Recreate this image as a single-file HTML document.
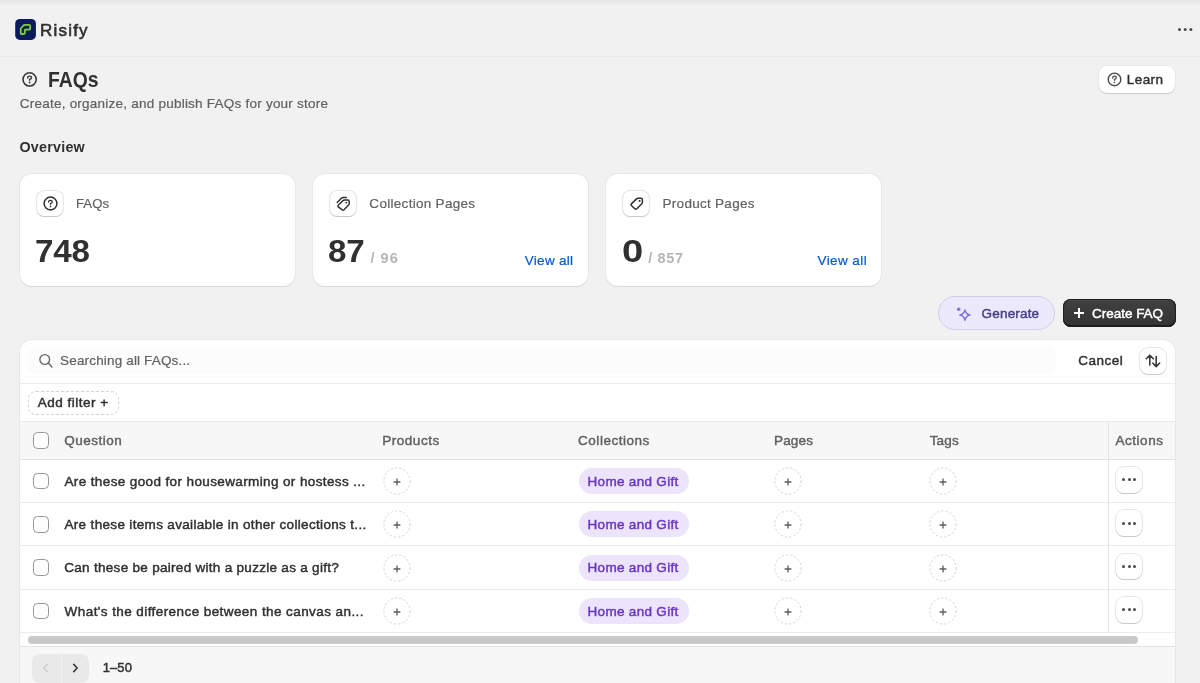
<!DOCTYPE html>
<html><head><meta charset="utf-8">
<style>
*{box-sizing:border-box;margin:0;padding:0}
html,body{width:1200px;height:683px;overflow:hidden;background:#f1f1f1;font-family:"Liberation Sans",sans-serif;color:#303030}
.abs{position:absolute}
.t{position:absolute;white-space:nowrap;line-height:1}
#txt{position:absolute;left:0;top:0;width:1200px;height:683px;will-change:transform}
#topstrip{left:0;top:0;width:1200px;height:6px;background:linear-gradient(#e6e6e6 0,#e7e7e7 30%,#eeeeee 70%,#f1f1f1 100%)}
#sep{left:0;top:56px;width:1200px;height:1px;background:#e9e9e9}
.card{position:absolute;background:#fff;border-radius:12px;box-shadow:0 1px 0 0 #d9d9d9,0 0 0 1px #e8e8e8}
.iconbox{position:absolute;width:25.6px;height:25.2px;border-radius:7px;background:#fff;box-shadow:0 1px 0 0 #c9c9c9,0 0 0 1px #e6e6e6}
#tbl{left:20px;top:339.7px;width:1155px;height:360px;background:#fff;border-radius:12px 12px 0 0;box-shadow:0 0 0 1px #e8e8e8}
.hrow{position:absolute;left:20px;width:1155px;height:1px;background:#ebebeb}
.cb{position:absolute;width:16.5px;height:16.5px;border:1px solid #969696;border-radius:4.5px;background:#fdfdfd}
.plus{position:absolute;width:27.4px;height:27.4px;border:1px dashed #d4d4d4;border-radius:50%}
.plus:before,.plus:after{content:"";position:absolute;background:#616161}
.plus:before{left:9.45px;top:12.05px;width:6.5px;height:1.3px}
.plus:after{left:12.05px;top:9.45px;width:1.3px;height:6.5px}
.tag{position:absolute;width:110.6px;height:26px;border-radius:13px;background:#ebe4fa}
.act{position:absolute;width:26.4px;height:25.6px;border-radius:8px;background:#fff;box-shadow:0 1px 0 0 #cbcbcb,0 0 0 1px #e7e7e7}
.act i{position:absolute;top:11.4px;width:3px;height:3px;border-radius:50%;background:#4a4a4a}
.btn{position:absolute;border-radius:8px;background:#fff;box-shadow:0 1px 0 0 #cbcbcb,0 0 0 1px #e7e7e7}
</style></head><body>
<div class="abs" id="topstrip"></div>
<div class="abs" id="sep"></div>

<!-- header -->
<svg class="abs" style="left:15px;top:19px" width="21" height="21" viewBox="0 0 21 21"><rect x="0.2" y="0" width="20.7" height="20.9" rx="4.6" fill="#0c1b5c"/><path d="M5.7 10.2 Q5.7 9.6 6.2 9 L8.4 6.5 Q9 5.9 9.8 5.9 H13.8 Q15.2 5.9 15.2 7.3 V9.4 Q15.2 10.6 14 10.6 H10 V13.8 Q10 15 8.8 15 H6.7 Q5.7 15 5.7 14 Z" fill="#0d2b36" stroke="#84cc3c" stroke-width="1.8" stroke-linejoin="round"/></svg>
<div class="abs" style="left:1177.5px;top:28.2px;width:3px;height:3px;border-radius:50%;background:#4a4a4a;box-shadow:5.7px 0 0 #4a4a4a,11.4px 0 0 #4a4a4a"></div>

<!-- title icon -->
<svg class="abs" style="left:21px;top:71px" width="17" height="17" viewBox="0 0 17 17"><circle cx="8.6" cy="8.4" r="6.6" fill="none" stroke="#3a3a3a" stroke-width="1.6"/><path d="M6.7 7.0 Q6.7 5.1 8.6 5.1 Q10.5 5.1 10.5 6.8 Q10.5 7.9 8.6 8.5 V9.3" fill="none" stroke="#3a3a3a" stroke-width="1.4" stroke-linecap="round"/><circle cx="8.6" cy="11.5" r="0.9" fill="#3a3a3a"/></svg>

<!-- learn -->
<div class="btn" style="left:1099px;top:66px;width:76px;height:27px"></div>
<svg class="abs" style="left:1106.2px;top:71px" width="17" height="17" viewBox="0 0 17 17"><circle cx="8.5" cy="8.4" r="6.3" fill="none" stroke="#4a4a4a" stroke-width="1.4"/><path d="M6.7 7.0 Q6.7 5.2 8.5 5.2 Q10.3 5.2 10.3 6.8 Q10.3 7.8 8.5 8.4 V9.2" fill="none" stroke="#4a4a4a" stroke-width="1.3" stroke-linecap="round"/><circle cx="8.5" cy="11.3" r="0.85" fill="#4a4a4a"/></svg>

<!-- cards -->
<div class="card" style="left:20px;top:174px;width:275px;height:112px"></div>
<div class="card" style="left:313px;top:174px;width:275px;height:112px"></div>
<div class="card" style="left:606px;top:174px;width:275px;height:112px"></div>
<div class="iconbox" style="left:37.2px;top:190.8px"></div>
<div class="iconbox" style="left:330.2px;top:190.8px"></div>
<div class="iconbox" style="left:623.2px;top:190.8px"></div>
<svg class="abs" style="left:41.5px;top:195.2px" width="17" height="17" viewBox="0 0 17 17"><circle cx="8.5" cy="8.5" r="6.4" fill="none" stroke="#303030" stroke-width="1.5"/><path d="M6.7 7.1 Q6.7 5.3 8.5 5.3 Q10.3 5.3 10.3 6.9 Q10.3 7.9 8.5 8.5 V9.3" fill="none" stroke="#303030" stroke-width="1.3" stroke-linecap="round"/><circle cx="8.5" cy="11.4" r="0.85" fill="#303030"/></svg>
<!-- collection icon -->
<svg class="abs" style="left:334.5px;top:195px" width="17" height="17" viewBox="0 0 17 17"><g fill="none" stroke="#303030" stroke-width="1.45" stroke-linecap="round" stroke-linejoin="round"><path d="M3.3 10.3 L8 5.6 Q8.7 5 9.6 5 H12.7 Q14.2 5 14.2 6.5 V8.6 Q14.2 9.5 13.6 10.1 L9 14.7 Q8 15.6 7 14.7 L3.3 11.9 Q2.5 11.1 3.3 10.3 Z"/><path d="M2.2 7.4 L6.4 3.2 Q7.2 2.4 8.3 2.4 H11.3"/></g><circle cx="11.3" cy="7.6" r="0.95" fill="#303030"/></svg>
<!-- product icon -->
<svg class="abs" style="left:627.5px;top:195px" width="17" height="17" viewBox="0 0 17 17"><g fill="none" stroke="#303030" stroke-width="1.5" stroke-linecap="round" stroke-linejoin="round"><path d="M3.4 8.9 L8.5 3.9 Q9.2 3.3 10.1 3.3 H12.9 Q14.4 3.3 14.4 4.8 V7.2 Q14.4 8.1 13.8 8.7 L8.8 13.7 Q7.8 14.6 6.8 13.7 L3.4 10.5 Q2.6 9.7 3.4 8.9 Z"/></g><circle cx="11.6" cy="6" r="1" fill="#303030"/></svg>

<!-- buttons -->
<div class="abs" style="left:937.8px;top:296px;width:116.8px;height:33.5px;border-radius:17px;background:#ece9fd;border:1px solid #d1cdea"></div>
<svg class="abs" style="left:955px;top:305px" width="18" height="18" viewBox="0 0 18 18"><circle cx="3.7" cy="4.3" r="1.8" fill="#8275d6"/><path d="M9.9 5 Q10.9 9.1 15 10.1 Q10.9 11.1 9.9 15.2 Q8.9 11.1 4.8 10.1 Q8.9 9.1 9.9 5 Z" fill="none" stroke="#8275d6" stroke-width="1.5" stroke-linejoin="round"/></svg>
<div class="abs" style="left:1063px;top:299px;width:112.6px;height:27.7px;border-radius:8px;background:linear-gradient(#404040,#333333);box-shadow:inset 0 0 0 1px #1f1f1f,inset 0 -2px 0 0 #1a1a1a,inset 0 1.5px 0 0 #555"></div>
<div class="abs" style="left:1074.2px;top:312.35px;width:9.8px;height:1.3px;background:#fff"></div>
<div class="abs" style="left:1078.45px;top:308.1px;width:1.3px;height:9.8px;background:#fff"></div>

<!-- table card -->
<div class="abs" id="tbl"></div>
<div class="abs" style="left:28px;top:347px;width:1028px;height:27px;border-radius:8px;background:#fcfcfc"></div>
<svg class="abs" style="left:38px;top:353px" width="16" height="16" viewBox="0 0 16 16"><circle cx="6.75" cy="6.5" r="4.85" fill="none" stroke="#6a6a6a" stroke-width="1.4"/><path d="M10.3 10 L13.9 13.9" stroke="#6a6a6a" stroke-width="1.5" stroke-linecap="round"/></svg>
<div class="btn" style="left:1140.2px;top:348.2px;width:26px;height:25.5px"></div>
<svg class="abs" style="left:1145px;top:353px" width="16" height="16" viewBox="0 0 16 16"><path d="M4.8 12 V2.4 M1.3 5.8 L4.8 2.2 L8.3 5.8 M11.2 3.6 V13.4 M7.7 10 L11.2 13.6 L14.7 10" fill="none" stroke="#3a3a3a" stroke-width="1.6" stroke-linecap="round" stroke-linejoin="round"/></svg>
<div class="hrow" style="top:383px"></div>
<div class="abs" style="left:27.5px;top:390.5px;width:91px;height:24px;border:1px dashed #d4d4d4;border-radius:8px"></div>
<div class="abs" style="left:20px;top:421px;width:1155px;height:39px;background:#f7f7f7;border-top:1px solid #ebebeb;border-bottom:1px solid #e3e3e3"></div>
<div class="cb" style="left:32.6px;top:432px"></div>
<div class="cb" style="left:32.5px;top:472.80px"></div>
<svg class="abs" style="left:382.6px;top:466.90px" width="28" height="28" viewBox="0 0 28 28"><circle cx="14" cy="14" r="13.1" fill="none" stroke="#d2d2d2" stroke-width="1" stroke-dasharray="2.2 2.05"/><path d="M10.6 15H17.4M14 11.6V18.4" stroke="#5c5c5c" stroke-width="1.3"/></svg>
<svg class="abs" style="left:774.4px;top:466.90px" width="28" height="28" viewBox="0 0 28 28"><circle cx="14" cy="14" r="13.1" fill="none" stroke="#d2d2d2" stroke-width="1" stroke-dasharray="2.2 2.05"/><path d="M10.6 15H17.4M14 11.6V18.4" stroke="#5c5c5c" stroke-width="1.3"/></svg>
<svg class="abs" style="left:929.4px;top:466.90px" width="28" height="28" viewBox="0 0 28 28"><circle cx="14" cy="14" r="13.1" fill="none" stroke="#d2d2d2" stroke-width="1" stroke-dasharray="2.2 2.05"/><path d="M10.6 15H17.4M14 11.6V18.4" stroke="#5c5c5c" stroke-width="1.3"/></svg>
<div class="tag" style="left:578.5px;top:468.10px"></div>
<div class="act" style="left:1116px;top:467.00px"><i style="left:6.4px"></i><i style="left:11.9px"></i><i style="left:17.4px"></i></div>
<div class="hrow" style="top:502.00px"></div>
<div class="cb" style="left:32.5px;top:516.13px"></div>
<svg class="abs" style="left:382.6px;top:510.23px" width="28" height="28" viewBox="0 0 28 28"><circle cx="14" cy="14" r="13.1" fill="none" stroke="#d2d2d2" stroke-width="1" stroke-dasharray="2.2 2.05"/><path d="M10.6 15H17.4M14 11.6V18.4" stroke="#5c5c5c" stroke-width="1.3"/></svg>
<svg class="abs" style="left:774.4px;top:510.23px" width="28" height="28" viewBox="0 0 28 28"><circle cx="14" cy="14" r="13.1" fill="none" stroke="#d2d2d2" stroke-width="1" stroke-dasharray="2.2 2.05"/><path d="M10.6 15H17.4M14 11.6V18.4" stroke="#5c5c5c" stroke-width="1.3"/></svg>
<svg class="abs" style="left:929.4px;top:510.23px" width="28" height="28" viewBox="0 0 28 28"><circle cx="14" cy="14" r="13.1" fill="none" stroke="#d2d2d2" stroke-width="1" stroke-dasharray="2.2 2.05"/><path d="M10.6 15H17.4M14 11.6V18.4" stroke="#5c5c5c" stroke-width="1.3"/></svg>
<div class="tag" style="left:578.5px;top:511.43px"></div>
<div class="act" style="left:1116px;top:510.33px"><i style="left:6.4px"></i><i style="left:11.9px"></i><i style="left:17.4px"></i></div>
<div class="hrow" style="top:545.33px"></div>
<div class="cb" style="left:32.5px;top:559.46px"></div>
<svg class="abs" style="left:382.6px;top:553.56px" width="28" height="28" viewBox="0 0 28 28"><circle cx="14" cy="14" r="13.1" fill="none" stroke="#d2d2d2" stroke-width="1" stroke-dasharray="2.2 2.05"/><path d="M10.6 15H17.4M14 11.6V18.4" stroke="#5c5c5c" stroke-width="1.3"/></svg>
<svg class="abs" style="left:774.4px;top:553.56px" width="28" height="28" viewBox="0 0 28 28"><circle cx="14" cy="14" r="13.1" fill="none" stroke="#d2d2d2" stroke-width="1" stroke-dasharray="2.2 2.05"/><path d="M10.6 15H17.4M14 11.6V18.4" stroke="#5c5c5c" stroke-width="1.3"/></svg>
<svg class="abs" style="left:929.4px;top:553.56px" width="28" height="28" viewBox="0 0 28 28"><circle cx="14" cy="14" r="13.1" fill="none" stroke="#d2d2d2" stroke-width="1" stroke-dasharray="2.2 2.05"/><path d="M10.6 15H17.4M14 11.6V18.4" stroke="#5c5c5c" stroke-width="1.3"/></svg>
<div class="tag" style="left:578.5px;top:554.76px"></div>
<div class="act" style="left:1116px;top:553.66px"><i style="left:6.4px"></i><i style="left:11.9px"></i><i style="left:17.4px"></i></div>
<div class="hrow" style="top:588.66px"></div>
<div class="cb" style="left:32.5px;top:602.79px"></div>
<svg class="abs" style="left:382.6px;top:596.89px" width="28" height="28" viewBox="0 0 28 28"><circle cx="14" cy="14" r="13.1" fill="none" stroke="#d2d2d2" stroke-width="1" stroke-dasharray="2.2 2.05"/><path d="M10.6 15H17.4M14 11.6V18.4" stroke="#5c5c5c" stroke-width="1.3"/></svg>
<svg class="abs" style="left:774.4px;top:596.89px" width="28" height="28" viewBox="0 0 28 28"><circle cx="14" cy="14" r="13.1" fill="none" stroke="#d2d2d2" stroke-width="1" stroke-dasharray="2.2 2.05"/><path d="M10.6 15H17.4M14 11.6V18.4" stroke="#5c5c5c" stroke-width="1.3"/></svg>
<svg class="abs" style="left:929.4px;top:596.89px" width="28" height="28" viewBox="0 0 28 28"><circle cx="14" cy="14" r="13.1" fill="none" stroke="#d2d2d2" stroke-width="1" stroke-dasharray="2.2 2.05"/><path d="M10.6 15H17.4M14 11.6V18.4" stroke="#5c5c5c" stroke-width="1.3"/></svg>
<div class="tag" style="left:578.5px;top:598.09px"></div>
<div class="act" style="left:1116px;top:596.99px"><i style="left:6.4px"></i><i style="left:11.9px"></i><i style="left:17.4px"></i></div>
<div class="hrow" style="top:631.99px"></div>

<div class="abs" style="left:1107.8px;top:421px;width:1px;height:211.5px;background:#e3e3e3"></div>
<div class="abs" style="left:27.8px;top:636.4px;width:1109.8px;height:7.7px;border-radius:4px;background:#c9c9c9"></div>
<div class="abs" style="left:20px;top:645.5px;width:1155px;height:40px;background:#f7f7f7;border-top:1px solid #e3e3e3"></div>
<div class="abs" style="left:32.3px;top:653.8px;width:56.8px;height:28.8px;border-radius:8px;background:#e9e9e9"></div>
<div class="abs" style="left:60.5px;top:654px;width:1px;height:29px;background:#f4f4f4"></div>
<svg class="abs" style="left:38px;top:660px" width="16" height="16" viewBox="0 0 16 16"><path d="M9.3 4.4 L5.8 8 L9.3 11.6" fill="none" stroke="#cfcfcf" stroke-width="1.6" stroke-linecap="round" stroke-linejoin="round"/></svg>
<svg class="abs" style="left:67px;top:660px" width="16" height="16" viewBox="0 0 16 16"><path d="M6.7 4.4 L10.2 8 L6.7 11.6" fill="none" stroke="#3a3a3a" stroke-width="1.6" stroke-linecap="round" stroke-linejoin="round"/></svg>
<div id="txt">
<div class="t" id="risify" style="left:40.10px;top:22.06px;font-size:17px;-webkit-text-stroke:0.6px currentColor;color:#303030;letter-spacing:1.188px;">Risify</div>
<div class="t" id="title" style="left:48.04px;top:70.10px;font-size:21.5px;font-weight:bold;color:#303030;letter-spacing:0.021px;transform:scaleX(0.90);transform-origin:0 0;">FAQs</div>
<div class="t" id="subt" style="left:19.78px;top:96.57px;font-size:13.5px;-webkit-text-stroke:0.2px currentColor;color:#616161;letter-spacing:0.231px;">Create, organize, and publish FAQs for your store</div>
<div class="t" id="ov" style="left:19.44px;top:139.50px;font-size:14.3px;font-weight:bold;color:#303030;letter-spacing:0.238px;">Overview</div>
<div class="t" id="learn" style="left:1126.85px;top:73.47px;font-size:13.5px;-webkit-text-stroke:0.45px currentColor;color:#303030;letter-spacing:0.417px;">Learn</div>
<div class="t" id="l1" style="left:75.99px;top:196.93px;font-size:13.2px;-webkit-text-stroke:0.2px currentColor;color:#616161;letter-spacing:0.055px;">FAQs</div>
<div class="t" id="l2" style="left:369.36px;top:196.57px;font-size:13.5px;-webkit-text-stroke:0.2px currentColor;color:#616161;letter-spacing:0.293px;">Collection Pages</div>
<div class="t" id="l3" style="left:662.52px;top:196.57px;font-size:13.5px;-webkit-text-stroke:0.2px currentColor;color:#616161;letter-spacing:0.286px;">Product Pages</div>
<div class="t" id="n1" style="left:35.11px;top:235.86px;font-size:31px;font-weight:bold;color:#303030;letter-spacing:-0.228px;transform:scaleX(1.07);transform-origin:0 0;">748</div>
<div class="t" id="n2" style="left:328.05px;top:235.86px;font-size:31px;font-weight:bold;color:#303030;letter-spacing:-0.155px;transform:scaleX(1.07);transform-origin:0 0;">87</div>
<div class="t" id="n3" style="left:621.54px;top:235.86px;font-size:31px;font-weight:bold;color:#303030;letter-spacing:0.000px;transform:scaleX(1.23);transform-origin:0 0;">0</div>
<div class="t" id="s2" style="left:370.47px;top:251.03px;font-size:14.5px;font-weight:bold;color:#b5b5b5;letter-spacing:1.019px;">/ 96</div>
<div class="t" id="s3" style="left:648.36px;top:251.03px;font-size:14.5px;font-weight:bold;color:#b5b5b5;letter-spacing:0.588px;">/ 857</div>
<div class="t" id="v2" style="left:524.85px;top:253.57px;font-size:13.5px;-webkit-text-stroke:0.2px currentColor;color:#005bd3;letter-spacing:0.256px;">View all</div>
<div class="t" id="v3" style="left:817.51px;top:253.57px;font-size:13.5px;-webkit-text-stroke:0.2px currentColor;color:#005bd3;letter-spacing:0.410px;">View all</div>
<div class="t" id="gen" style="left:981.60px;top:306.87px;font-size:13.5px;-webkit-text-stroke:0.45px currentColor;color:#463f82;letter-spacing:0.174px;">Generate</div>
<div class="t" id="cf" style="left:1092.10px;top:306.77px;font-size:13.5px;-webkit-text-stroke:0.45px currentColor;color:#ffffff;letter-spacing:-0.034px;">Create FAQ</div>
<div class="t" id="srch" style="left:60.09px;top:354.47px;font-size:13.5px;-webkit-text-stroke:0.2px currentColor;color:#616161;letter-spacing:0.159px;">Searching all FAQs...</div>
<div class="t" id="cancel" style="left:1078.29px;top:354.47px;font-size:13.5px;-webkit-text-stroke:0.45px currentColor;color:#303030;letter-spacing:0.470px;">Cancel</div>
<div class="t" id="af" style="left:37.76px;top:396.37px;font-size:13.5px;-webkit-text-stroke:0.45px currentColor;color:#303030;letter-spacing:0.502px;">Add filter +</div>
<div class="t" id="h1" style="left:64.27px;top:434.27px;font-size:13.5px;-webkit-text-stroke:0.45px currentColor;color:#616161;letter-spacing:0.490px;">Question</div>
<div class="t" id="h2" style="left:382.13px;top:434.27px;font-size:13.5px;-webkit-text-stroke:0.45px currentColor;color:#616161;letter-spacing:0.548px;">Products</div>
<div class="t" id="h3" style="left:578.04px;top:434.27px;font-size:13.5px;-webkit-text-stroke:0.45px currentColor;color:#616161;letter-spacing:0.530px;">Collections</div>
<div class="t" id="h4" style="left:773.91px;top:434.27px;font-size:13.5px;-webkit-text-stroke:0.45px currentColor;color:#616161;letter-spacing:0.222px;">Pages</div>
<div class="t" id="h5" style="left:929.63px;top:434.27px;font-size:13.5px;-webkit-text-stroke:0.45px currentColor;color:#616161;letter-spacing:0.231px;">Tags</div>
<div class="t" id="h6" style="left:1115.48px;top:434.27px;font-size:13.5px;-webkit-text-stroke:0.45px currentColor;color:#616161;letter-spacing:0.531px;">Actions</div>
<div class="t" id="q0" style="left:64.46px;top:475.07px;font-size:13.5px;-webkit-text-stroke:0.45px currentColor;color:#303030;letter-spacing:0.380px;">Are these good for housewarming or hostess ...</div>
<div class="t" id="q1" style="left:64.46px;top:518.42px;font-size:13.5px;-webkit-text-stroke:0.45px currentColor;color:#303030;letter-spacing:0.334px;">Are these items available in other collections t...</div>
<div class="t" id="q2" style="left:64.29px;top:560.77px;font-size:13.5px;-webkit-text-stroke:0.45px currentColor;color:#303030;letter-spacing:0.293px;">Can these be paired with a puzzle as a gift?</div>
<div class="t" id="q3" style="left:64.61px;top:605.12px;font-size:13.5px;-webkit-text-stroke:0.45px currentColor;color:#303030;letter-spacing:0.420px;">What's the difference between the canvas an...</div>
<div class="t" id="g0" style="left:587.53px;top:475.07px;font-size:13.5px;-webkit-text-stroke:0.45px currentColor;color:#6a35c4;letter-spacing:0.309px;">Home and Gift</div>
<div class="t" id="g1" style="left:587.53px;top:518.42px;font-size:13.5px;-webkit-text-stroke:0.45px currentColor;color:#6a35c4;letter-spacing:0.309px;">Home and Gift</div>
<div class="t" id="g2" style="left:587.53px;top:560.77px;font-size:13.5px;-webkit-text-stroke:0.45px currentColor;color:#6a35c4;letter-spacing:0.309px;">Home and Gift</div>
<div class="t" id="g3" style="left:587.53px;top:605.12px;font-size:13.5px;-webkit-text-stroke:0.45px currentColor;color:#6a35c4;letter-spacing:0.309px;">Home and Gift</div>
<div class="t" id="pg" style="left:102.66px;top:661.20px;font-size:13px;-webkit-text-stroke:0.45px currentColor;color:#303030;letter-spacing:0.105px;">1–50</div>
</div>

</body></html>
